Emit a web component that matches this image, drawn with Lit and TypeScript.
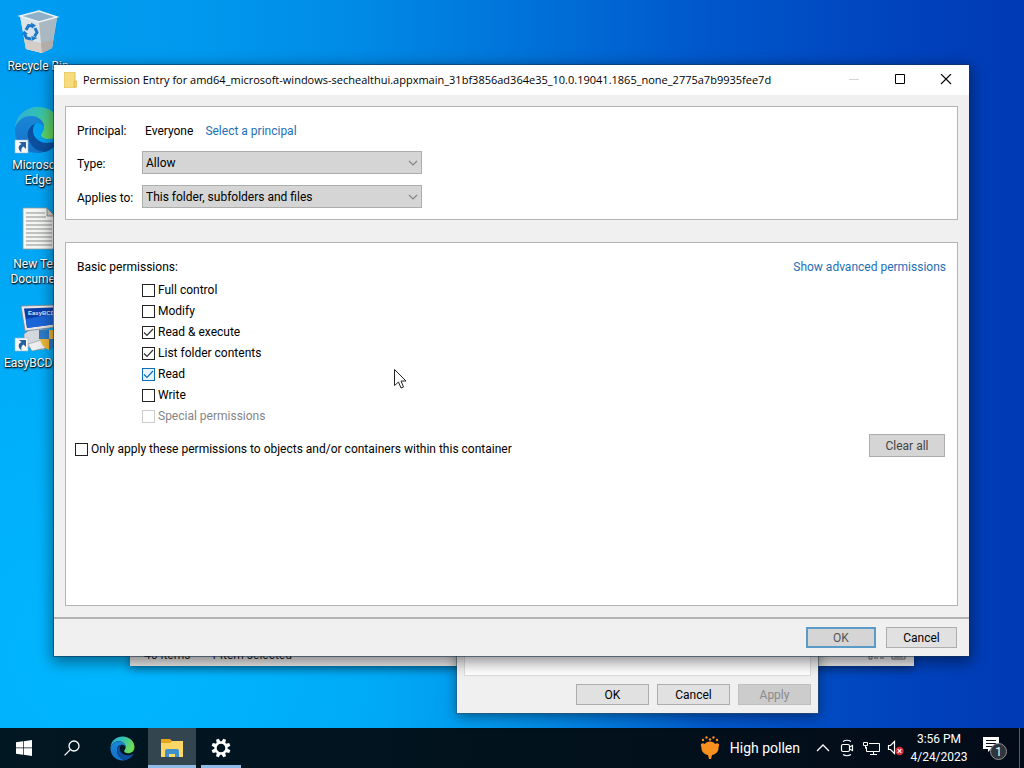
import { LitElement, html, css, svg } from "lit";
import { customElement } from "lit/decorators.js";

const edgeSwirl = (id: string) => svg`
  <defs>
    <linearGradient id="${id}g" x1="0" y1="0" x2="1" y2="0.35">
      <stop offset="0" stop-color="#2fa9dc"/><stop offset=".5" stop-color="#33c1b5"/><stop offset="1" stop-color="#6ddc55"/>
    </linearGradient>
    <linearGradient id="${id}b" x1="0" y1="0" x2="0" y2="1">
      <stop offset="0" stop-color="#1a86d6"/><stop offset="1" stop-color="#1470c8"/>
    </linearGradient>
  </defs>
  <path d="M1 22C2 9 12 1 24 1c14 0 23 10 23 20 0 8-6 12-12 12-5 0-8-2-8-4s3-3 3-8c0-6-6-11-13-11C9 10 3 15 1 22z" fill="url(#${id}g)"/>
  <path d="M1 22C4 14 10 10 17 10c7 0 13 5 13 10-2-2-5-3-8-3-6 0-10 7-8 15 2 7 8 13 16 14-3 1-4 1-6 1C10 47 0 36 1 22z" fill="url(#${id}b)"/>
  <path d="M22 17c-6 2-10 8-8 15 2 8 9 14 17 14 6-2 11-6 14-11 0-1 0-2-1-1-3 2-7 3-11 3-8 0-14-6-14-12 0-4 1-6 3-8z" fill="#0c4f9e"/>`;

const shortcut = svg`
  <rect x="1" y="34" width="13" height="13" fill="#f8f8f8" stroke="#9db4c8" stroke-width=".6"/>
  <path d="M5 36h7v7l-2.500-2.500c-2 1-2.500 3-2 6-4-3.500-3.500-7 0-8.500z" fill="#27609e"/>`;

@customElement("desktop-icons")
class DesktopIcons extends LitElement {
  static styles = css`
    :host { display: block; width: 76px; padding-top: 7px; }
    .cell { display: flex; flex-direction: column; align-items: center; gap: 4px; height: 99px; }
    .cell svg { width: 48px; height: 48px; flex: none; }
    .label { line-height: 15px; text-align: center; color: #fff; text-shadow: 0 1px 2px #000, 1px 1px 1px rgba(0, 0, 0, .7); }
  `;
  render() {
    return html`
      <div class="cell">
        <svg viewBox="0 0 48 48">
          <path d="M6 9l6 33 16 4 10-5 5-30-18 4z" fill="#c5cfd6"/>
          <path d="M6 9l19 5 3 32-16-4z" fill="#d9e3e8"/>
          <path d="M25 14l18-4-5 31-10 5z" fill="#aab8c2"/>
          <path d="M10 32l17 4 1 10-16-4z" fill="#d5cdc8"/>
          <path d="M27 36l12-3-1 8-10 5z" fill="#b3aca8"/>
          <path d="M6 9l19-5 18 6-18 5z" fill="#8fb0c6" stroke="#e9f2f6" stroke-width="1.500"/>
          <g fill="none" stroke="#1b78cb" stroke-width="3"><path d="M12 23l2.500-4.500 4.500.5"/><path d="M21 21l2 4.500-2.500 4"/><path d="M17 32l-4.500-1-2-4"/></g>
          <path d="M17 15.500l5 3-4 3zM23.500 31l-6 3v-5zM8 28l2-4.500 4 3.500z" fill="#1b78cb"/>
        </svg>
        <span class="label">Recycle Bin</span>
      </div>
      <div class="cell">
        <svg viewBox="0 0 48 48">${edgeSwirl("d")}${shortcut}</svg>
        <span class="label">Microsoft<br>Edge</span>
      </div>
      <div class="cell">
        <svg viewBox="0 0 48 48">
          <path d="M9 3h24l8 8v33H9z" fill="#f5f5f2" stroke="#8e999f" stroke-width=".8"/>
          <path d="M33 3v8h8z" fill="#cfcfc8" stroke="#777" stroke-width=".8"/>
          <path d="M12 8h19M12 12h20M12 16h26M12 20h26M12 24h26M12 28h26M12 32h26M12 36h26M12 40h26" stroke="#8b8f93"/>
        </svg>
        <span class="label">New Text<br>Document</span>
      </div>
      <div class="cell">
        <svg viewBox="0 0 48 48">
          <path d="M10 30l8-6 16 2-4 20-20-4z" fill="#d4d8de" stroke="#7d858e" stroke-width=".6"/>
          <path d="M7 2l35-1 1 22-32 4z" fill="#e8e6e6" stroke="#7a8390" stroke-width=".8"/>
          <path d="M10 4.500l29-1v17l-26 3.500z" fill="#0b3fa8"/>
          <path d="M12 15l27-5v10.500l-26 3.500z" fill="#1a66d8"/>
          <text x="14" y="11" font-size="6" font-family="Liberation Sans, sans-serif" font-weight="bold" fill="#d6e6ff">EasyBCD</text>
          <path d="M14 40l16-5 6 8-18 4z" fill="#eceef1" stroke="#8b929b" stroke-width=".6"/>
          <path d="M25 26h10v9H25z" fill="#2e7cc8"/><path d="M35 26h10v9H35z" fill="#efb83a"/>
          <path d="M26 35h9v11c-5-2-8-6-9-11z" fill="#efb83a"/><path d="M35 35h9c-1 5-4 9-9 11z" fill="#2e7cc8"/>
          ${shortcut}
        </svg>
        <span class="label">EasyBCD 2.4</span>
      </div>`;
  }
}

const controls = css`
  button { height: 23px; padding: 0; border: 1px solid #adadad; background: #e1e1e1; color: #000; font: inherit; }
`;

@customElement("permission-dialog")
class PermissionDialog extends LitElement {
  static styles = [controls, css`
    :host { display: flex; flex-direction: column; background: #f0f0f0; color: #000; box-shadow: 0 0 0 1px rgba(20, 50, 80, .55), 0 4px 14px 2px rgba(0, 0, 0, .45); }
    .titlebar { display: flex; align-items: center; height: 30px; padding-left: 10px; background: #fff; }
    .folder { width: 13px; height: 16px; flex: none; }
    .title { flex: 1; margin: 0 0 0 6px; font-family: "Open Sans", "Noto Sans", sans-serif; font-size: 11px; font-weight: 400; white-space: nowrap; overflow: hidden; }
    .caption { width: 46px; height: 30px; border: 0; background: none; display: grid; place-items: center; }
    .caption svg { width: 12px; height: 12px; }
    .body { flex: 1; display: flex; flex-direction: column; gap: 22px; padding: 11px; }
    .panel { background: #fff; border: 1px solid #b4b4b4; }
    .fields { display: grid; grid-template-columns: 65px minmax(0, 280px); grid-template-rows: 20px 23px 23px; row-gap: 11px; align-items: center; padding: 13px 11px 11px; }
    .fields label, .fields .name { padding-top: 2px; }
    .principal { display: flex; gap: 12px; padding: 2px 0 0 3px; white-space: nowrap; }
    a { color: #1d6fb5; text-decoration: none; }
    select { appearance: none; width: 100%; height: 23px; padding: 0 20px 0 3px; border: 1px solid #adadad; border-radius: 0; color: #000; font: inherit;
      background: #d5d5d5 url("data:image/svg+xml,%3Csvg xmlns='http://www.w3.org/2000/svg' width='10' height='6'%3E%3Cpath d='M1 1l4 4 4-4' fill='none' stroke='%23858585' stroke-width='1.2'/%3E%3C/svg%3E") no-repeat right 3px center; }
    .permissions { flex: 1; padding: 14px 11px; }
    .head { display: flex; justify-content: space-between; align-items: center; height: 20px; margin-bottom: 2px; }
    .list { display: grid; grid-auto-rows: 21px; padding-left: 65px; }
    .check { display: flex; align-items: center; gap: 3px; }
    .check.off { color: #858585; }
    input { appearance: none; box-sizing: border-box; flex: none; width: 13px; height: 13px; margin: 1px 0 0; border: 1px solid #222; background: #fff; }
    input:checked { background: #fff url("data:image/svg+xml,%3Csvg xmlns='http://www.w3.org/2000/svg' width='11' height='11'%3E%3Cpath d='M1 5.500l3 3 6-6.500' fill='none' stroke='%23333' stroke-width='1.2'/%3E%3C/svg%3E") center no-repeat; }
    input.hot:checked { border-color: #0b6fb8; background: #e8f4fd url("data:image/svg+xml,%3Csvg xmlns='http://www.w3.org/2000/svg' width='11' height='11'%3E%3Cpath d='M1 5.500l3 3 6-6.500' fill='none' stroke='%230b6fb8' stroke-width='1.2'/%3E%3C/svg%3E") center no-repeat; }
    input:disabled { border-color: #ccc; }
    .scope { display: flex; align-items: center; justify-content: space-between; margin: 8px 1px 0 -2px; }
    .clear { width: 76px; background: #d5d5d5; color: #444; }
    .scope .check { padding-top: 6px; }
    .footer { display: flex; justify-content: flex-end; align-items: center; gap: 10px; height: 37px; padding-right: 12px; border-top: 2px solid #b2b2b2; }
    .footer button { width: 71px; height: 21px; }
    .footer .default { width: 70px; border: 2px solid #5b9bc8; background: #d5d5d5; color: #555; }
  `];

  private row(label: string, checked = false, hot = false, disabled = false) {
    return html`<label class="check ${disabled ? "off" : ""}">
      <input type="checkbox" class=${hot ? "hot" : ""} .checked=${checked} ?disabled=${disabled}>${label}</label>`;
  }

  render() {
    return html`
      <header class="titlebar">
        <svg class="folder" viewBox="0 0 13 16"><path d="M0 0h11v16H0z" fill="#f5dc7c"/><path d="M0 0h11v16H0z" fill="none" stroke="#e3c25c"/><path d="M10 9h3v6h-3z" fill="#f0d068" stroke="#d6b348" stroke-width=".6"/></svg>
        <h1 class="title">Permission Entry for amd64_microsoft-windows-sechealthui.appxmain_31bf3856ad364e35_10.0.19041.1865_none_2775a7b9935fee7d</h1>
        <button class="caption" aria-label="Minimize" disabled><svg viewBox="0 0 12 12"><path d="M1 5.500h10" stroke="#d4d4d4"/></svg></button>
        <button class="caption" aria-label="Maximize"><svg viewBox="0 0 12 12"><path d="M1.500.500h9v9h-9z" fill="none" stroke="#000"/></svg></button>
        <button class="caption" aria-label="Close"><svg viewBox="0 0 12 12"><path d="M1 0l10 10M11 0L1 10" stroke="#000" stroke-width="1.100"/></svg></button>
      </header>
      <div class="body">
        <section class="panel fields">
          <span class="name">Principal:</span>
          <div class="principal"><span>Everyone</span><a href="#">Select a principal</a></div>
          <label for="type">Type:</label>
          <select id="type"><option>Allow</option><option>Deny</option></select>
          <label for="applies">Applies to:</label>
          <select id="applies"><option>This folder, subfolders and files</option></select>
        </section>
        <section class="panel permissions">
          <div class="head"><span>Basic permissions:</span><a href="#">Show advanced permissions</a></div>
          <div class="list">
            ${this.row("Full control")}
            ${this.row("Modify")}
            ${this.row("Read & execute", true)}
            ${this.row("List folder contents", true)}
            ${this.row("Read", true, true)}
            ${this.row("Write")}
            ${this.row("Special permissions", false, false, true)}
          </div>
          <div class="scope">
            ${this.row("Only apply these permissions to objects and/or containers within this container")}
            <button class="clear">Clear all</button>
          </div>
        </section>
      </div>
      <footer class="footer"><button class="default">OK</button><button>Cancel</button></footer>`;
  }
}

@customElement("task-bar")
class TaskBar extends LitElement {
  static styles = css`
    :host { display: flex; height: 40px; background: linear-gradient(90deg, #011722, #02111c 60%, #030b18); color: #fff; }
    button { display: grid; place-items: center; height: 40px; padding: 0; border: 0; background: none; color: inherit; font: inherit; }
    .apps { display: flex; gap: 2px; }
    .app { width: 48px; }
    .start { margin-right: -2px; }
    .active { background: #33454f; border-bottom: 3px solid #8fbce6; padding-top: 3px; }
    .running { width: 40px; margin: 0 3px; border-bottom: 3px solid #8fbce6; padding-top: 3px; }
    .tray { display: flex; margin-left: auto; }
    .weather { display: flex; align-items: center; gap: 10px; padding-right: 11px; font-size: 14px; }
    .small { width: 24px; }
    .clock { width: 64px; line-height: 18px; text-align: center; align-content: center; justify-items: center; }
    .notes { width: 48px; }
    .peek { width: 4px; border-left: 1px solid #53606b; }
  `;
  render() {
    return html`
      <nav class="apps">
        <button class="app start" aria-label="Start"><svg width="16" height="16" viewBox="0 0 16 16" fill="#fff"><path d="M0 2.300l7-1v6.300H0zM7.700 1.200L16 0v7.600H7.700zM0 8.300h7v6.400l-7-1zM7.700 8.300H16V16l-8.300-1.200z"/></svg></button>
        <button class="app" aria-label="Search"><svg width="16" height="16" viewBox="0 0 16 16" fill="none" stroke="#fff" stroke-width="1.300"><circle cx="10" cy="6" r="5"/><path d="M6.300 9.600L.6 15.400"/></svg></button>
        <button class="app" aria-label="Microsoft Edge"><svg width="25" height="25" viewBox="0 0 48 48">${edgeSwirl("t")}</svg></button>
        <button class="app active" aria-label="File Explorer"><svg width="22" height="18" viewBox="0 0 22 18"><path d="M0 0h9l2 2h11v16H0z" fill="#e8a51c"/><path d="M0 4h9l2-2h11v16H0z" fill="#ffd767"/><path d="M4 18v-6q0-2 2-2h10q2 0 2 2v6h-4v-3H8v3z" fill="#3f8fc9"/></svg></button>
        <button class="app running" aria-label="Settings"><svg width="20" height="20" viewBox="-10 -10 20 20" fill="#fff"><circle r="5.500" fill="none" stroke="#fff" stroke-width="2.400"/>${[0, 45, 90, 135, 180, 225, 270, 315].map((a) => svg`<path d="M-2-6l.5-3.500h3L2-6z" transform="rotate(${a + 22.5})"/>`)}</svg></button>
      </nav>
      <div class="tray">
        <button class="weather"><svg width="20" height="24" viewBox="0 0 20 24" fill="#f7901e"><circle cx="3" cy="4" r="1.200"/><circle cx="6.500" cy="1.500" r="1.200"/><circle cx="13.500" cy="1.500" r="1.200"/><circle cx="17" cy="4" r="1.200"/><circle cx="10" cy="3.500" r="1.200"/><path d="M1 8q2-1.500 4 0 1-2.500 5-2.500t5 2.500q2-1.500 4 0c.5 1.500-.5 2.500-.5 4 0 4-3 6.500-6.500 7l-1 4h-2l-1-4c-3.500-.5-6.500-3-6.500-7 0-1.500-1-2.500-.5-4z"/></svg><span>High pollen</span></button>
        <button class="small" aria-label="Show hidden icons"><svg width="14" height="8" viewBox="0 0 14 8" fill="none" stroke="#fff" stroke-width="1.300"><path d="M1 7l6-6 6 6"/></svg></button>
        <button class="small" aria-label="Meet Now"><svg width="14" height="18" viewBox="0 0 14 18" fill="none" stroke="#fff" stroke-width="1.200"><rect x="1.500" y="5.500" width="8" height="7" rx="1.500"/><path d="M9.500 8l3-1.500v5l-3-1.500M3 2.500q4-2.500 8 0M3 15.500q4 2.500 8 0"/></svg></button>
        <button class="small" aria-label="Network"><svg width="17" height="15" viewBox="0 0 17 15" fill="none" stroke="#fff"><path d="M6 2.500h10.500v8H3.500V6M7 13.500h7M10.500 10.500v3M.5 1.500h4v3h-4zM2.500 4.500v3"/></svg></button>
        <button class="small" aria-label="Volume muted"><svg width="17" height="16" viewBox="0 0 17 16"><path d="M1.500 5.500h2l4-4v12l-4-4h-2z" fill="none" stroke="#fff" stroke-width="1.200"/><circle cx="12.500" cy="11" r="4.200" fill="#d92b35"/><path d="M10.700 9.200l3.600 3.600M14.300 9.200l-3.600 3.600" stroke="#fff" stroke-width="1.100"/></svg></button>
        <button class="clock"><span>3:56 PM</span><span>4/24/2023</span></button>
        <button class="notes" aria-label="Notifications"><svg width="24" height="24" viewBox="0 0 24 24"><path d="M0 1h16v12H8l-3 3v-3H0z" fill="#fff"/><path d="M3 4.500h10M3 7.500h10M3 10.500h7" stroke="#02111c"/><circle cx="15.500" cy="15.500" r="8" fill="#30353c" stroke="#8b9096"/><text x="15.500" y="20" text-anchor="middle" font-size="12" fill="#fff">1</text></svg></button>
        <span class="peek"></span>
      </div>`;
  }
}

@customElement("app-root")
class AppRoot extends LitElement {
  static styles = [controls, css`
    :host { display: flex; flex-direction: column; height: 100vh; overflow: hidden; font: 12px/16px Roboto, "Open Sans", sans-serif; }
    .desktop { flex: 1; position: relative; background: radial-gradient(ellipse 60% 85% at 10% 90%, rgba(0, 184, 255, .95) 0%, rgba(0, 178, 250, .8) 45%, rgba(0, 170, 245, 0) 100%), linear-gradient(90deg, #009df2 0%, #0098ee 20%, #008ae6 35%, #0074da 50%, #0056ca 70%, #0043bd 88%, #003ab4 100%); }
    .explorer { position: absolute; left: 130px; right: 110px; bottom: 62px; display: flex; align-items: center; gap: 20px; height: 22px; padding: 0 8px 0 14px; box-sizing: border-box; background: #ececec; color: #222; box-shadow: 0 3px 8px rgba(0, 0, 0, .4); }
    .explorer svg { margin-left: auto; }
    .properties { position: absolute; left: 457px; right: 206px; bottom: 15px; box-sizing: border-box; padding: 0 7px 8px; background: #f0f0f0; box-shadow: 0 0 0 1px rgba(60, 80, 100, .5), 0 3px 12px rgba(0, 0, 0, .45); }
    .sheet { height: 40px; border: 1px solid #dcdcdc; background: #fff; }
    .buttons { display: flex; justify-content: flex-end; gap: 8px; padding-top: 8px; }
    .buttons button { width: 73px; height: 21px; }
    .buttons button:disabled { background: #ccc; border-color: #bfbfbf; color: #8a8a8a; }
    .dialog { position: absolute; left: 54px; right: 55px; top: 65px; bottom: 72px; }
    .cursor { position: absolute; left: 394px; top: 369px; }
  `];
  render() {
    return html`
      <main class="desktop">
        <desktop-icons></desktop-icons>
        <div class="explorer"><span>46 items</span><span>1 item selected</span>
          <svg width="38" height="12" viewBox="0 0 38 12" fill="none" stroke="#666"><path d="M1 1h3v3H1zM1 7h3v3H1zM6 3h4M12 3h4M6 9h4M12 9h4M24 1h13v9H24zM26 8h9"/></svg>
        </div>
        <div class="properties">
          <div class="sheet"></div>
          <div class="buttons"><button>OK</button><button>Cancel</button><button disabled>Apply</button></div>
        </div>
        <permission-dialog class="dialog"></permission-dialog>
        <svg class="cursor" width="13" height="20" viewBox="0 0 13 20"><path d="M.5.500v16l4-3.500 2.500 6 2.500-1-2.500-6h5z" fill="#fff" stroke="#222"/></svg>
      </main>
      <task-bar></task-bar>`;
  }
}
